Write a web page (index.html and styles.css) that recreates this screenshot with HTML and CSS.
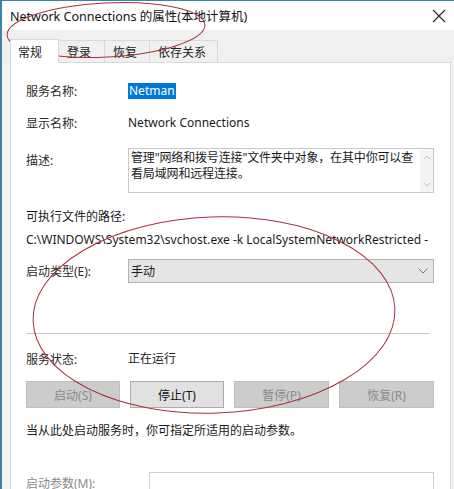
FILE: index.html
```html
<!DOCTYPE html>
<html lang="zh-CN">
<head>
<meta charset="utf-8">
<title>Network Connections 的属性(本地计算机)</title>
<link rel="stylesheet" href="styles.css">
</head>
<body>
<div class="window">
  <div class="titlebar">
    <span class="title">Network Connections 的属性(本地计算机)</span>
    <svg class="close" width="14" height="14" viewBox="0 0 14 14"><path d="M1 1L13 13M13 1L1 13" stroke="#222" stroke-width="1.1" fill="none"/></svg>
  </div>
  <div class="tabstrip">
    <div class="tab active">常规</div>
    <div class="tab">登录</div>
    <div class="tab">恢复</div>
    <div class="tab">依存关系</div>
  </div>
  <div class="panel">
    <div class="row r-name">
      <span class="label">服务名称:</span>
      <span class="value"><span class="sel">Netman</span></span>
    </div>
    <div class="row r-display">
      <span class="label">显示名称:</span>
      <span class="value">Network Connections</span>
    </div>
    <div class="row r-desc">
      <span class="label desc-label">描述:</span>
      <div class="textarea">
        <div class="ta-text">管理"网络和拨号连接"文件夹中对象，在其中你可以查看局域网和远程连接。</div>
        <div class="ta-scroll">
          <svg width="8" height="5" viewBox="0 0 8 5"><path d="M0.5 4.5L4 1L7.5 4.5" stroke="#c4c4c4" fill="none"/></svg>
          <svg width="8" height="5" viewBox="0 0 8 5"><path d="M0.5 0.5L4 4L7.5 0.5" stroke="#c4c4c4" fill="none"/></svg>
        </div>
      </div>
    </div>
    <div class="path-label">可执行文件的路径:</div>
    <div class="path-value">C:\WINDOWS\System32\svchost.exe -k LocalSystemNetworkRestricted -</div>
    <div class="row r-start">
      <span class="label">启动类型(E):</span>
      <div class="select">
        <span>手动</span>
        <svg width="10" height="6" viewBox="0 0 10 6"><path d="M0.5 0.5L5 5L9.5 0.5" stroke="#777" fill="none"/></svg>
      </div>
    </div>
    <div class="sep"></div>
    <div class="row r-status">
      <span class="label">服务状态:</span>
      <span class="value">正在运行</span>
    </div>
    <div class="buttons">
      <div class="btn disabled">启动(S)</div>
      <div class="btn">停止(T)</div>
      <div class="btn disabled">暂停(P)</div>
      <div class="btn disabled">恢复(R)</div>
    </div>
    <div class="hint">当从此处启动服务时，你可指定所适用的启动参数。</div>
    <div class="row r-params">
      <span class="label params-label">启动参数(M):</span>
      <div class="input"></div>
    </div>
  </div>
  <svg class="annot" width="454" height="489" viewBox="0 0 454 489">
    <ellipse cx="106" cy="30" rx="99" ry="27" transform="rotate(-3 106 30)" fill="none" stroke="#a8323c" stroke-width="1"/>
    <ellipse cx="214" cy="315" rx="181" ry="98" transform="rotate(-2 214 315)" fill="none" stroke="#a8323c" stroke-width="1"/>
  </svg>
</div>
</body>
</html>
```

FILE: styles.css
```css
html, body {
  margin: 0;
  padding: 0;
  background: #f3f3f3;
}
.window {
  position: relative;
  width: 454px;
  height: 489px;
  overflow: hidden;
  box-sizing: border-box;
  border-left: 2px solid #3a86a8;
  border-top: 1px solid #3a86a8;
  background: #f3f3f3;
  font-family: "Noto Sans", "Noto Sans CJK SC", sans-serif;
  font-size: 12px;
  color: #1b1b1b;
}
.titlebar {
  height: 29px;
  background: #ffffff;
  display: flex;
  align-items: center;
  justify-content: space-between;
  padding: 0 8px 0 8px;
}
.title {
  font-size: 12.5px;
  color: #111;
}
.close {
  display: block;
}
.tabstrip {
  height: 32px;
  box-sizing: border-box;
  background: #f0f0f0;
  display: flex;
  align-items: flex-end;
  padding-left: 8px;
}
.tab {
  height: 22px;
  box-sizing: border-box;
  border: 1px solid #d9d9d9;
  border-bottom: none;
  border-left: none;
  padding: 0 10px 0 8px;
  display: flex;
  align-items: center;
  background: #f0f0f0;
  color: #222;
}
.tab:nth-child(2) { width: 46px; }
.tab:nth-child(3) { width: 45px; }
.tab:nth-child(4) { width: 68px; }
.tab.active {
  width: 49px;
  height: 24px;
  background: #ffffff;
  border-left: 1px solid #d9d9d9;
  padding-left: 7px;
  margin-bottom: -1px;
  position: relative;
  z-index: 1;
}
.panel {
  background: #ffffff;
  border: 1px solid #d9d9d9;
  margin: 0 3px 0 8px;
  height: 460px;
  box-sizing: border-box;
  padding: 20px 16px 0 15px;
}
.row {
  display: flex;
  align-items: center;
}
.label {
  width: 102px;
  flex: none;
  color: #2a2a2a;
}
.value {
  line-height: 16px;
}
.sel {
  background: #0078d7;
  color: #fff;
  padding: 0 1px;
  display: inline-block;
  line-height: 16px;
}
.r-name { height: 16px; }
.r-display { height: 16px; margin-top: 16px; }
.r-desc {
  margin-top: 17px;
  align-items: flex-start;
}
.desc-label { padding-top: 3px; }
.textarea {
  flex: 1;
  height: 45px;
  box-sizing: border-box;
  border: 1px solid #c9c9c9;
  display: flex;
}
.ta-text {
  flex: 1;
  padding: 1px 0 1px 2px;
  line-height: 16px;
  letter-spacing: -0.15px;
}
.ta-scroll {
  width: 13px;
  background: #f4f4f4;
  display: flex;
  flex-direction: column;
  justify-content: space-between;
  align-items: center;
  padding: 6px 0 5px;
}
.path-label {
  margin-top: 16px;
  height: 16px;
  line-height: 16px;
}
.path-value {
  margin-top: 7px;
  height: 16px;
  line-height: 16px;
  white-space: nowrap;
}
.r-start {
  margin-top: 11px;
  height: 24px;
}
.select {
  flex: 1;
  height: 24px;
  box-sizing: border-box;
  background: #e5e5e5;
  border: 1px solid #b4b4b4;
  display: flex;
  align-items: center;
  justify-content: space-between;
  padding: 0 5px 0 2px;
}
.sep {
  margin-top: 50px;
  height: 1px;
  background: #c8c8c8;
  margin-right: 5px;
}
.r-status {
  margin-top: 17px;
  height: 16px;
}
.buttons {
  margin-top: 14px;
  display: grid;
  grid-template-columns: 94px 94px 95px 95px;
  justify-content: space-between;
}
.btn {
  height: 27px;
  box-sizing: border-box;
  border: 1px solid #adadad;
  background: #e1e1e1;
  display: flex;
  align-items: center;
  justify-content: center;
  color: #111;
}
.btn.disabled {
  background: #cccccc;
  border-color: #bfbfbf;
  color: #8a8a8a;
}
.hint {
  margin-top: 15px;
  height: 16px;
  line-height: 16px;
}
.r-params {
  margin-top: 33px;
  align-items: flex-start;
}
.params-label {
  width: 123px;
  padding-top: 2px;
  color: #8a8a8a;
}
.input {
  flex: 1;
  height: 30px;
  box-sizing: border-box;
  border: 1px solid #d0d0d0;
}
.annot {
  position: absolute;
  left: -2px;
  top: -1px;
  pointer-events: none;
}
```
